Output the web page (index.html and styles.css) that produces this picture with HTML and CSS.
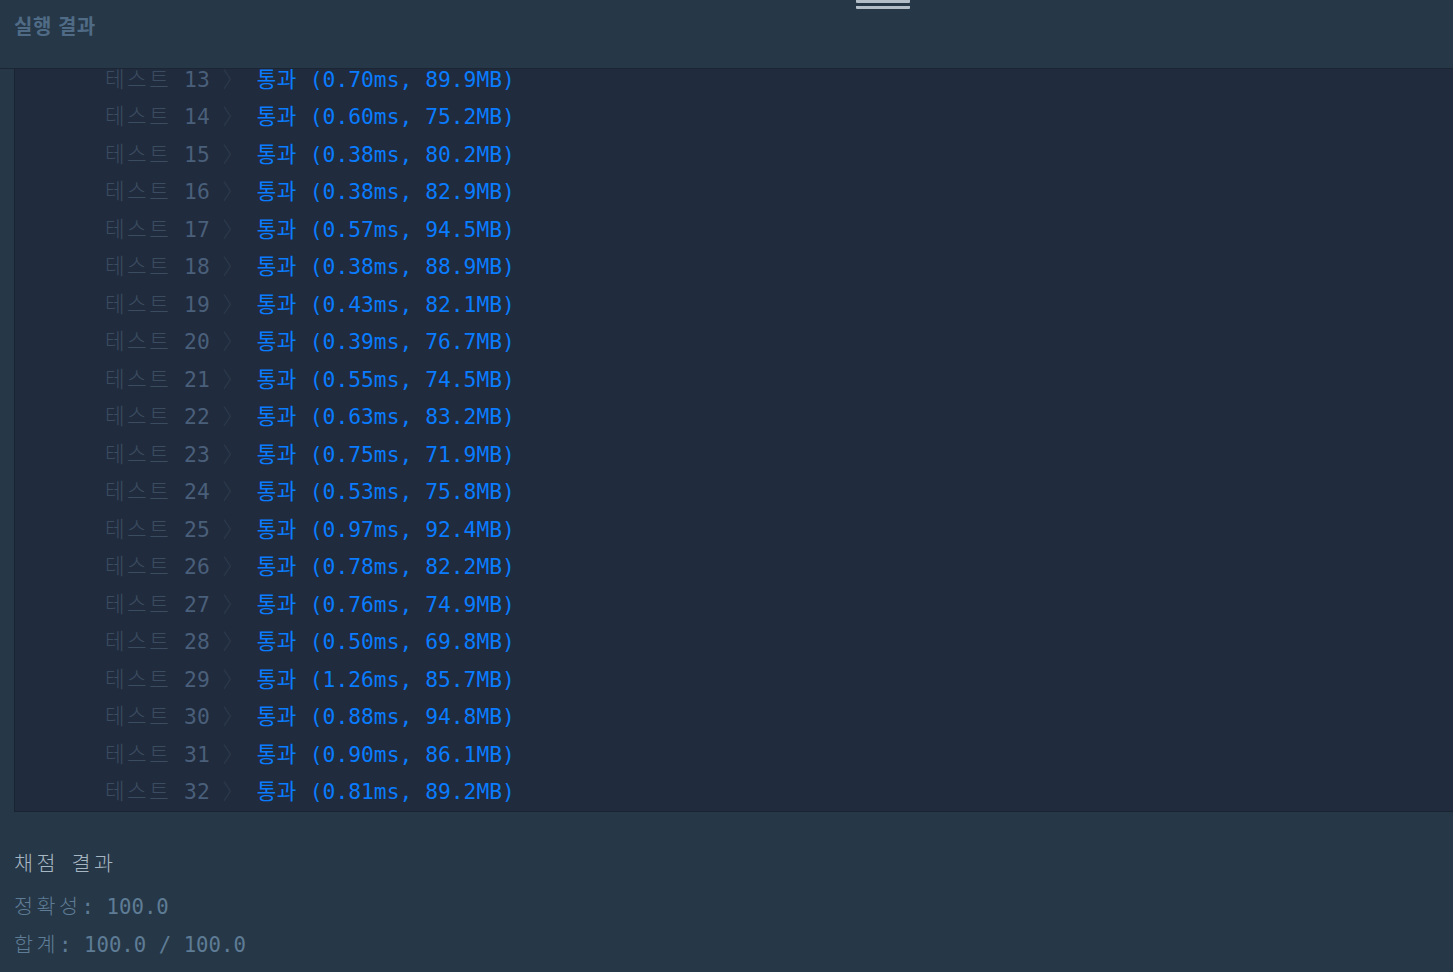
FILE: index.html
```html
<!DOCTYPE html>
<html lang="ko">
<head>
    <meta charset="UTF-8">
    <meta name="viewport" content="width=device-width, initial-scale=1.0">
    <title>실행 결과</title>
    <link rel="stylesheet" href="styles.css">
</head>
<body>
    <div class="resize-handle">
        <span class="bar"></span>
        <span class="bar"></span>
    </div>

    <div class="run-head">
        <h2 class="run-title">실행 결과</h2>
    </div>

    <div class="console">
        <div class="console-inner" id="rows"></div>
    </div>

    <div class="grading">
        <p class="grading-title"><span class="ko">채점</span> <span class="ko">결과</span></p>
        <p class="grading-line"><span class="ko">정확성</span>: 100.0</p>
        <p class="grading-line"><span class="ko">합계</span>: 100.0 / 100.0</p>
    </div>

    <script>
        const results = [
            [13, '0.70', '89.9'], [14, '0.60', '75.2'], [15, '0.38', '80.2'],
            [16, '0.38', '82.9'], [17, '0.57', '94.5'], [18, '0.38', '88.9'],
            [19, '0.43', '82.1'], [20, '0.39', '76.7'], [21, '0.55', '74.5'],
            [22, '0.63', '83.2'], [23, '0.75', '71.9'], [24, '0.53', '75.8'],
            [25, '0.97', '92.4'], [26, '0.78', '82.2'], [27, '0.76', '74.9'],
            [28, '0.50', '69.8'], [29, '1.26', '85.7'], [30, '0.88', '94.8'],
            [31, '0.90', '86.1'], [32, '0.81', '89.2']
        ];

        const rows = document.getElementById('rows');
        rows.innerHTML = results.map(([n, ms, mb]) =>
            '<div class="row">' +
            '<span class="label ko">테스트</span> ' +
            `<span class="num">${n}</span> ` +
            '<span class="arrow">〉</span> ' +
            `<span class="pass"><span class="ko-tight">통과</span> (${ms}ms, ${mb}MB)</span>` +
            '</div>'
        ).join('');
    </script>
</body>
</html>
```

FILE: styles.css
```css
body {
    margin: 0;
    height: 972px;
    overflow: hidden;
    background-color: #263747;
    font-family: "DejaVu Sans Mono", "Noto Sans CJK KR", monospace;
    font-weight: 300;
}

.ko {
    letter-spacing: 2.5px;
}

.ko-tight {
    letter-spacing: 0.5px;
}

.resize-handle {
    position: absolute;
    top: 0;
    left: 856px;
    width: 54px;
    display: flex;
    flex-direction: column;
    gap: 3px;
}

.resize-handle .bar {
    display: block;
    height: 3px;
    background-color: #b3bec8;
    border-radius: 0 0 1px 1px;
}

.run-head {
    height: 69px;
    box-sizing: border-box;
    padding: 14px 0 0 14px;
    border-bottom: 1px solid #1b2533;
}

.run-title {
    margin: 0;
    font-family: "Noto Sans CJK KR", "Noto Sans", sans-serif;
    font-size: 20px;
    font-weight: 700;
    line-height: 24px;
    color: #4f6b86;
    letter-spacing: 0.5px;
}

.console {
    margin-left: 14px;
    height: 742px;
    overflow: hidden;
    background-color: #202b3d;
    border-left: 1px solid #1a2330;
    border-bottom: 1px solid #1a2330;
}

.console-inner {
    margin-top: -8.25px;
    padding-left: 90px;
}

.row {
    font-size: 21.3px;
    line-height: 37.5px;
    white-space: pre;
}

.label {
    color: #3b4c60;
}

.num {
    color: #4a5f7a;
}

.arrow {
    color: #2e3c4f;
}

.pass {
    color: #0a7cff;
    font-weight: 400;
}

.grading {
    padding: 33px 0 0 14px;
}

.grading p {
    margin: 0;
    font-size: 20.7px;
    line-height: 38px;
    white-space: pre;
}

.grading .ko {
    letter-spacing: 3.5px;
}

.grading-title {
    color: #a7b6c3;
    margin-bottom: 5px !important;
}

.grading-line {
    color: #5e7c95;
}
```
